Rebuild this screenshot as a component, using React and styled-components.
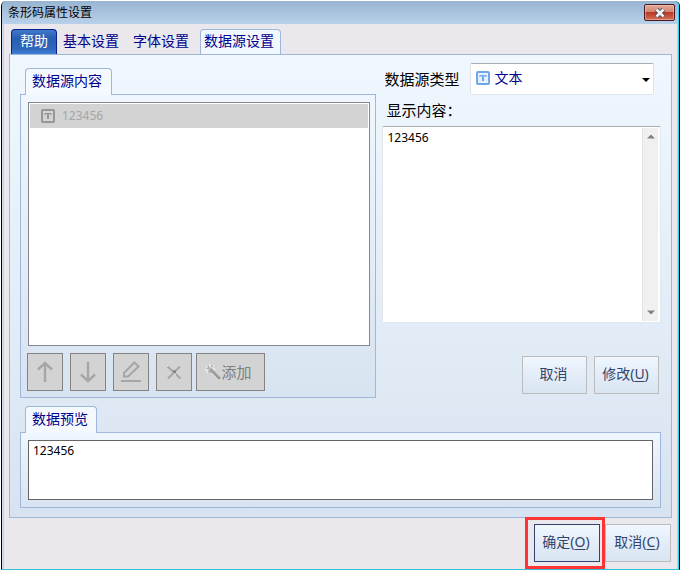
import React, { useState } from "react";
import styled, { createGlobalStyle, css } from "styled-components";

const line = "#9db8d9";

const GlobalStyle = createGlobalStyle`
  * { box-sizing: border-box; }
  body { margin: 0; background: #fff; }
  button, input, select, textarea { font: inherit; margin: 0; }
  body {
    font-family: "Noto Sans", "Noto Sans CJK SC", sans-serif;
    font-size: 14px;
    line-height: 20px;
    color: #000;
  }
`;

const Desktop = styled.div`
  min-height: 100vh;
  display: flex;
  padding: 1px 0 0 1px;
  background: #fff;
`;

const Dialog = styled.div`
  flex: 1;
  display: flex;
  flex-direction: column;
  background: #ebe8ed;
  border-left: 1px solid #000;
  border-right: 1px solid #000;
  border-bottom: 1px solid #35c3dc;
  border-radius: 5px 5px 0 0;
  box-shadow: inset -1px 0 #35d0f0, inset 1px 0 #d3dfee, inset 2px 0 #c3d0e0,
    inset -2px 0 #b9d1ea;
`;

const TitleBar = styled.header`
  display: flex;
  align-items: center;
  justify-content: space-between;
  height: 23px;
  padding: 0 4px 0 6px;
  border-radius: 5px 5px 0 0;
  background: linear-gradient(#98b4d0, #b9d1ea);
  box-shadow: inset -1px 0 #35d0f0;
`;

const Title = styled.h1`
  margin: 0;
  font-size: 12px;
  font-weight: 400;
  color: #000;
`;

const CloseButton = styled.button`
  display: flex;
  align-items: center;
  justify-content: center;
  width: 31px;
  height: 17px;
  padding: 0;
  border: 1px solid #4a1a22;
  border-radius: 2px;
  background: linear-gradient(#e3a898 0, #d58674 45%, #b93a24 50%, #d4705a 100%);
  box-shadow: inset 0 0 0 1px rgba(255, 220, 210, 0.4);
`;

const Body = styled.main`
  flex: 1;
  display: flex;
  flex-direction: column;
  padding: 5px 7px 7px;
`;

const TabBar = styled.nav`
  display: flex;
  align-items: stretch;
  height: 26px;
  padding-left: 2px;
  margin-bottom: -1px;
`;

const Tab = styled.button`
  display: flex;
  align-items: flex-start;
  padding: 0 7px 0 5px;
  border: 1px solid transparent;
  border-bottom: 0;
  border-radius: 4px 4px 0 0;
  background: none;
  color: #00008b;
  line-height: 22px;
  white-space: nowrap;
  ${(p) =>
    p.$variant === "help" &&
    css`
      padding: 0 8px;
      margin-bottom: 1px;
      border-color: #0b1f8f;
      background: linear-gradient(#3f7acb, #2a5db0 35%, #2f68bd 80%, #3f80d8);
      color: #fff;
    `}
  ${(p) =>
    p.$variant === "active" &&
    css`
      margin-left: 3px;
      padding: 0 6px 0 3px;
      border-color: ${line};
      background: #f1f7fe;
    `}
`;

const Panel = styled.section`
  flex: 1;
  display: flex;
  flex-direction: column;
  gap: 8px;
  padding: 8px 10px 9px;
  border: 1px solid ${line};
  background: linear-gradient(#f0f7fe, #e2ecf6 60%, #d8e3f1);
`;

const Columns = styled.div`
  flex: 1;
  display: grid;
  grid-template-columns: 32fr 25fr;
  gap: 6px;
`;

const Group = styled.section`
  display: flex;
  flex-direction: column;
  margin-top: ${(p) => (p.$main ? 5 : 0)}px;
`;

const GroupTab = styled.h2`
  align-self: flex-start;
  height: 27px;
  margin: 0 0 -1px 5px;
  padding: 0 ${(p) => (p.$tight ? 8 : 9)}px 0 6px;
  border: 1px solid ${line};
  border-bottom: 0;
  border-radius: 4px 4px 0 0;
  background: #f4f9ff;
  color: #00008b;
  font-size: 14px;
  font-weight: 400;
  line-height: 24px;
  z-index: 1;
`;

const GroupBody = styled.div`
  flex: 1;
  display: flex;
  flex-direction: column;
  gap: 7px;
  padding: ${(p) => (p.$preview ? "7px" : "7px 5px 6px 6px")};
  border: 1px solid ${line};
  background: linear-gradient(#eff6fe, #d8e3f1);
`;

const List = styled.ul`
  flex: 1;
  margin: 0 0 0 1px;
  padding: 1px;
  list-style: none;
  border: 1px solid #828790;
  background: #fff;
`;

const ListRow = styled.li`
  display: flex;
  align-items: center;
  gap: 7px;
  height: 24px;
  padding-left: 11px;
  background: #d3d3d3;
  color: #a6a6a6;
  font-size: 12px;
`;

const Tools = styled.div`
  display: flex;
  gap: 7px;
`;

const ToolButton = styled.button`
  display: flex;
  align-items: center;
  justify-content: center;
  width: ${(p) => (p.$wide ? 69 : 36)}px;
  height: 38px;
  margin-left: ${(p) => (p.$wide ? -3 : 0)}px;
  padding: 0 ${(p) => (p.$wide ? 4 : 0)}px 0 0;
  border: 1px solid #838383;
  background: #d3d3d3;
  color: #808080;
  font-size: 15px;
`;

const Side = styled.div`
  min-width: 0;
  display: flex;
  flex-direction: column;
`;

const TypeRow = styled.div`
  display: flex;
  align-items: center;
  gap: 10px;
  padding: 0 7px 0 2px;
  font-size: 15px;
`;

const SelectWrap = styled.div`
  position: relative;
  flex: 1;
  > svg { position: absolute; pointer-events: none; }
  > svg:first-child { left: 6px; top: 8px; }
  > svg:last-child { right: 4px; top: 15px; }
`;

const Select = styled.select`
  display: block;
  width: 100%;
  height: 32px;
  padding: 0 20px 2px 24px;
  appearance: none;
  border: 1px solid #dfe4ec;
  border-top-color: #abadb3;
  border-radius: 2px;
  background: #fff;
  color: #00008b;
  font-size: 14px;
`;

const ContentLabel = styled.label`
  padding: 5px 4px 6px;
  font-size: 15px;
  line-height: 20px;
`;

const TextFrame = styled.div`
  flex: 1;
  display: flex;
  padding: 1px 2px 1px 0;
  border: 1px solid #e2e6ee;
  border-top-color: #abadb3;
  border-radius: 2px;
  background: #fff;
`;

const ContentText = styled.textarea`
  flex: 1;
  min-width: 0;
  padding: 0 4px;
  border: 0;
  outline: 0;
  resize: none;
  background: transparent;
  font-size: 12px;
  line-height: 20px;
`;

const ScrollTrack = styled.div`
  display: flex;
  flex-direction: column;
  justify-content: space-between;
  align-items: center;
  width: 16px;
  padding: 6px 0;
  border-left: 1px solid #e3e3e3;
  background: #f0f0f0;
`;

const Actions = styled.div`
  display: flex;
  justify-content: flex-end;
  gap: ${(p) => (p.$footer ? 5 : 7)}px;
  padding: ${(p) => (p.$footer ? "6px 1px 0 0" : "33px 2px 4px 0")};
`;

const PushButton = styled.button`
  width: ${(p) => (p.$footer ? 66 : 65)}px;
  height: 38px;
  padding: 0 2px 2px 0;
  border: 1px solid ${(p) => (p.$primary ? "#33456e" : "#bcbcbc")};
  background: linear-gradient(#eff6fe, #d8e4f2);
  color: #33456e;
  font-size: 14px;
  white-space: nowrap;
  u { text-underline-offset: 2px; }
`;

const Marked = styled.div`
  position: relative;
  &::after {
    content: "";
    position: absolute;
    inset: -7px -5px -7px -9px;
    border: 3px solid #fc3434;
    pointer-events: none;
  }
`;

const PreviewText = styled.textarea`
  display: block;
  width: 100%;
  height: 60px;
  padding: 0 4px;
  border: 1px solid #646464;
  outline: 0;
  resize: none;
  background: #fff;
  font-size: 12px;
  line-height: 20px;
`;

const TextIcon = ({ color, tint = "none" }) => (
  <svg width="14" height="14" viewBox="0 0 14 14" aria-hidden="true">
    <rect x="1" y="1" width="12" height="12" rx="1" strokeWidth="2" stroke={color} fill={tint} />
    <path d="M3.5 4h7v2h-1V5.3H8V10h-2V5.3H4.500V6h-1z" fill={color} />
  </svg>
);

const ToolIcon = ({ children, size = 24 }) => (
  <svg width={size} height={size} viewBox={`0 0 ${size} ${size}`} fill="none" stroke="#a6a6a6" strokeWidth="2" aria-hidden="true">
    {children}
  </svg>
);

const Arrow = ({ up }) => (
  <svg width="8" height="5" viewBox="0 0 8 5" aria-hidden="true">
    <path d={up ? "M0 4.5L4 0.5l4 4z" : "M0 .5h8l-4 4z"} fill="#808080" />
  </svg>
);

export default function App() {
  const [content, setContent] = useState("123456");
  return (
    <>
      <GlobalStyle />
      <Desktop>
        <Dialog role="dialog" aria-labelledby="title">
          <TitleBar>
            <Title id="title">条形码属性设置</Title>
            <CloseButton aria-label="关闭">
              <svg width="12" height="10" viewBox="0 0 12 10" aria-hidden="true">
                <path d="M2.5 1.5l7 7M9.5 1.5l-7 7" stroke="#4a4552" strokeWidth="4.5" />
                <path d="M2.5 1.5l7 7M9.5 1.5l-7 7" stroke="#f4f4f4" strokeWidth="2.6" />
              </svg>
            </CloseButton>
          </TitleBar>
          <Body>
            <TabBar>
              <Tab $variant="help">帮助</Tab>
              <Tab>基本设置</Tab>
              <Tab>字体设置</Tab>
              <Tab $variant="active" aria-current="page">数据源设置</Tab>
            </TabBar>
            <Panel>
              <Columns>
                <Group $main>
                  <GroupTab>数据源内容</GroupTab>
                  <GroupBody>
                    <List role="listbox" aria-label="数据源内容">
                      <ListRow role="option" aria-selected="true">
                        <TextIcon color="#979797" />
                        123456
                      </ListRow>
                    </List>
                    <Tools>
                      <ToolButton disabled aria-label="上移">
                        <ToolIcon><path d="M12 22V3M5 9.5L12 3l7 6.5" strokeWidth="2.4" /></ToolIcon>
                      </ToolButton>
                      <ToolButton disabled aria-label="下移">
                        <ToolIcon><path d="M12 2v19M5 14.5L12 21l7-6.5" strokeWidth="2.4" /></ToolIcon>
                      </ToolButton>
                      <ToolButton disabled aria-label="编辑">
                        <ToolIcon><path d="M5 13L15.5 2.5l4 4L9 16.500H5zM2 21h20" /></ToolIcon>
                      </ToolButton>
                      <ToolButton disabled aria-label="删除">
                        <ToolIcon>
                          <path d="M5.5 6.5l13 12M18 6.5l-12 12" />
                          <path d="M11 11.5h3" stroke="#787878" />
                          <path d="M5 6.500l1-1.500M17.500 6l1-1M12 14l2 1" stroke="#eee" strokeWidth="1" />
                        </ToolIcon>
                      </ToolButton>
                      <ToolButton disabled $wide>
                        <ToolIcon size={16}>
                          <path d="M6 7l9 9" stroke="#eee" strokeWidth="3" />
                          <path d="M5 5l10 10" stroke="#9c9c9c" strokeWidth="3" />
                          <path d="M5 0v3M1 2l2 2M0 6h3M2 9l2-2M9 1L7 3M8 5h2" stroke="#eee" strokeWidth="1.5" />
                          <path d="M3 2l1 2M2 4l2 1M7 1v2M3 8l2-1M6 6v3" strokeWidth="1.3" />
                        </ToolIcon>
                        添加
                      </ToolButton>
                    </Tools>
                  </GroupBody>
                </Group>
                <Side>
                  <TypeRow>
                    <label htmlFor="type">数据源类型</label>
                    <SelectWrap>
                      <TextIcon color="#6fa8ea" tint="#e6f1fd" />
                      <Select id="type" defaultValue="text">
                        <option value="text">文本</option>
                      </Select>
                      <svg width="8" height="4" viewBox="0 0 8 4" aria-hidden="true">
                        <path d="M0 0h8L4 4z" />
                      </svg>
                    </SelectWrap>
                  </TypeRow>
                  <ContentLabel htmlFor="content">显示内容：</ContentLabel>
                  <TextFrame>
                    <ContentText id="content" value={content} onChange={(e) => setContent(e.target.value)} />
                    <ScrollTrack aria-hidden="true">
                      <Arrow up />
                      <Arrow />
                    </ScrollTrack>
                  </TextFrame>
                  <Actions>
                    <PushButton>取消</PushButton>
                    <PushButton>修改(<u>U</u>)</PushButton>
                  </Actions>
                </Side>
              </Columns>
              <Group>
                <GroupTab as="label" htmlFor="preview" $tight>数据预览</GroupTab>
                <GroupBody $preview>
                  <PreviewText id="preview" readOnly value={content} />
                </GroupBody>
              </Group>
            </Panel>
            <Actions $footer>
              <Marked>
                <PushButton $footer $primary>确定(<u>O</u>)</PushButton>
              </Marked>
              <PushButton $footer>取消(<u>C</u>)</PushButton>
            </Actions>
          </Body>
        </Dialog>
      </Desktop>
    </>
  );
}
